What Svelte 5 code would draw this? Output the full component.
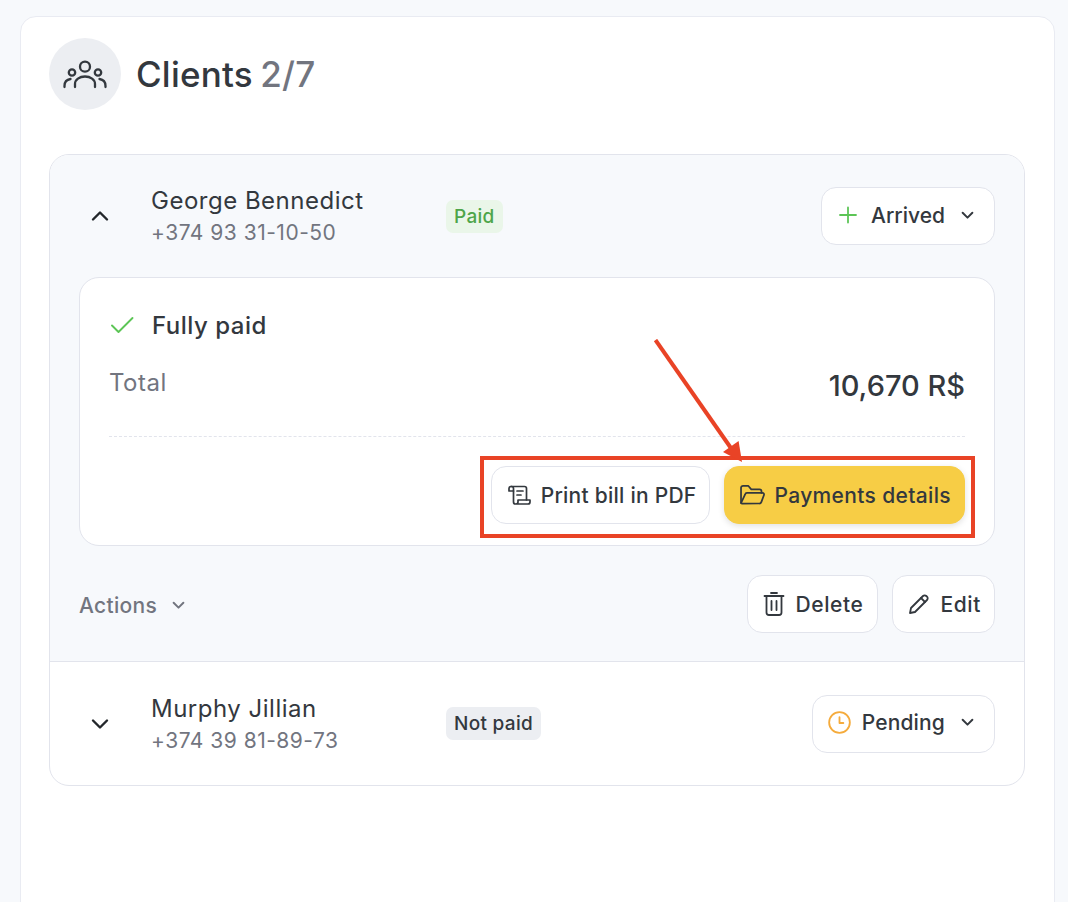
<script>
  const clients = [
    { name: "George Bennedict", phone: "+374 93 31-10-50", badge: "Paid", paid: true, status: "Arrived", open: true },
    { name: "Murphy Jillian", phone: "+374 39 81-89-73", badge: "Not paid", paid: false, status: "Pending", open: false }
  ];
</script>

{#snippet chevron(cls)}
  <svg class={cls} viewBox="0 0 12 8" fill="none" stroke="currentColor" stroke-linecap="round" stroke-linejoin="round">
    <path d="M1.5 1.5 6 6l4.5-4.5" />
  </svg>
{/snippet}

<div class="page">
  <div class="card">
    <header class="title-row">
      <div class="avatar">
        <svg width="44" height="44" viewBox="0 0 44 44" fill="none" stroke="#33383e" stroke-width="2.300" stroke-linecap="round">
          <circle cx="22" cy="14.700" r="5" />
          <circle cx="9" cy="20.500" r="3.200" />
          <circle cx="35" cy="20.500" r="3.200" />
          <path d="M12 35v-3a10 7.500 0 0 1 20 0v3" />
          <path d="M1.500 35v-1c0-4 2.500-6.500 6-7" />
          <path d="M42.500 35v-1c0-4-2.500-6.500-6-7" />
        </svg>
      </div>
      <h1>Clients <span>2/7</span></h1>
    </header>

    <div class="list">
      {#each clients as c}
        <section class="client" class:open={c.open}>
          <div class="client-head">
            <svg class="toggle" viewBox="0 0 18 12" fill="none" stroke="#23272b" stroke-width="2.400" stroke-linecap="round" stroke-linejoin="round">
              {#if c.open}
                <path d="M2 9.500 9 2.500l7 7" />
              {:else}
                <path d="M2 2.500l7 7 7-7" />
              {/if}
            </svg>
            <div class="who">
              <div class="name">{c.name}</div>
              <div class="phone">{c.phone}</div>
            </div>
            <span class="badge" class:paid={c.paid}>{c.badge}</span>
            <button class="btn status" class:pending={!c.paid}>
              {#if c.paid}
                <svg class="plus" width="20" height="20" viewBox="0 0 20 20" fill="none" stroke="#5cc556" stroke-width="1.800" stroke-linecap="round">
                  <path d="M10 2.500v15M2 10h16" />
                </svg>
              {:else}
                <svg class="clock" width="23" height="23" viewBox="0 0 24 24" fill="none" stroke="#f5ab3c" stroke-width="1.900" stroke-linecap="round" stroke-linejoin="round">
                  <circle cx="12" cy="12" r="10.800" />
                  <path d="M12 6.500V12.500h4" />
                </svg>
              {/if}
              <span>{c.status}</span>
              {@render chevron("chev")}
            </button>
          </div>

          {#if c.open}
            <div class="bill">
              <div class="bill-state">
                <svg width="26" height="20" viewBox="0 0 26 20" fill="none" stroke="#5cc556" stroke-width="1.900" stroke-linecap="round" stroke-linejoin="round">
                  <path d="M3 10.500 9.500 17 23.500 3" />
                </svg>
                <span>Fully paid</span>
              </div>
              <div class="bill-total">
                <span class="total-label">Total</span>
                <span class="total-sum">10,670 R$</span>
              </div>
              <div class="bill-actions">
                <button class="btn print">
                  <svg width="24" height="24" viewBox="0 0 24 24" fill="none" stroke="#33383e" stroke-width="1.700" stroke-linecap="round" stroke-linejoin="round">
                    <path d="M4 3.500h13.500a2 2 0 0 1 2 2V17" />
                    <path d="M4 3.500a2 2 0 0 0-2 2V8h4.500V5.500a2 2 0 0 0-2-2" />
                    <path d="M6.500 8v11a2 2 0 0 0 2 2h12.500a2 2 0 0 0 2-2v-2H11v2a2 2 0 0 1-2 2" />
                    <path d="M10 8h6M10 12h4" />
                  </svg>
                  <span>Print bill in PDF</span>
                </button>
                <button class="btn primary">
                  <svg width="25" height="24" viewBox="1 2 24.400 21" fill="none" stroke="#33383e" stroke-width="1.700" stroke-linecap="round" stroke-linejoin="round">
                    <path d="M2 20V5.500a2 2 0 0 1 2-2h5l3 3.500h8a2 2 0 0 1 2 2v1.500" />
                    <path d="M2 20.500 6 12a2 2 0 0 1 1.800-1.500H23a1.500 1.500 0 0 1 1.400 2l-2.600 7a2 2 0 0 1-1.900 1.300H3.500A1.500 1.500 0 0 1 2 20.500Z" />
                  </svg>
                  <span>Payments details</span>
                </button>
              </div>
            </div>

            <div class="client-foot">
              <div class="actions">
                <span>Actions</span>
                {@render chevron("chev light")}
              </div>
              <div class="foot-btns">
                <button class="btn">
                  <svg width="22" height="26" viewBox="0 0 22 26" fill="none" stroke="#33383e" stroke-width="1.800" stroke-linecap="round" stroke-linejoin="round">
                    <path d="M1.500 5h19M8 2h6" />
                    <path d="M3.500 5v16.500a2.500 2.500 0 0 0 2.500 2.500h10a2.500 2.500 0 0 0 2.500-2.500V5" />
                    <path d="M8.500 10v9M13.500 10v9" />
                  </svg>
                  <span>Delete</span>
                </button>
                <button class="btn">
                  <svg width="22" height="22" viewBox="0 0 22 22" fill="none" stroke="#33383e" stroke-width="1.800" stroke-linecap="round" stroke-linejoin="round">
                    <path d="M2 20l1-5L15 3a2.300 2.300 0 0 1 3.300 0l.7.700a2.300 2.300 0 0 1 0 3.300L7 19Z" />
                    <path d="M13 5l4 4" />
                  </svg>
                  <span>Edit</span>
                </button>
              </div>
            </div>
          {/if}
        </section>
      {/each}
    </div>
  </div>

  <!-- annotation drawn over the screenshot -->
  <div class="callout"></div>
  <svg class="arrow" width="100" height="130" viewBox="0 0 100 130" fill="none">
    <path d="M2.500 1 80 112" stroke="#e94326" stroke-width="4" />
    <path d="M89 123 85.600 102 70 113Z" fill="#e94326" />
  </svg>
</div>

<style>
  :global(body) {
    margin: 0;
    background: #f7f9fc;
    font-family: Inter, "Liberation Sans", sans-serif;
    color: #33383e;
  }

  .page {
    position: relative;
    height: 902px;
    overflow: hidden;
    padding: 16px 13px 0 20px;
    box-sizing: border-box;
  }

  .card {
    background: #fff;
    border: 1px solid #e9ebf2;
    border-radius: 16px;
    padding: 21px 28px 0;
    height: 960px;
    box-sizing: border-box;
  }

  .title-row {
    display: flex;
    align-items: center;
    gap: 15px;
    margin-bottom: 44px;
  }

  .avatar {
    width: 72px;
    height: 72px;
    border-radius: 50%;
    background: #eceef2;
    display: flex;
    align-items: center;
    justify-content: center;
  }

  h1 {
    margin: 0;
    font-size: 35px;
    font-weight: 500;
    line-height: 72px;
    letter-spacing: 0.2px;
  }

  h1 span {
    margin-left: -2px;
    color: #72757f;
  }

  .list {
    width: 976px;
    border: 1px solid #e2e4ec;
    border-radius: 20px;
    overflow: hidden;
    box-sizing: border-box;
  }

  .client + .client {
    border-top: 1px solid #e2e4ec;
  }

  .client.open {
    background: #f7f9fc;
    padding-bottom: 28px;
  }

  .client-head {
    display: flex;
    align-items: center;
    height: 123px;
    padding: 0 29px 0 41px;
  }

  .client.open .client-head {
    height: 122px;
  }

  .toggle {
    width: 18px;
    height: 12px;
    flex: none;
  }

  .who {
    margin-left: 42px;
    padding-top: 2px;
    width: 295px;
    flex: none;
  }

  .name {
    font-size: 24px;
    line-height: 32px;
    letter-spacing: 0.5px;
    color: #33383e;
  }

  .phone {
    font-size: 21px;
    line-height: 32px;
    letter-spacing: 0.5px;
    color: #72757f;
  }

  .badge {
    background: #eceef2;
    border-radius: 7px;
    padding: 0 8px;
    font-size: 19px;
    line-height: 33px;
    font-weight: 500;
    letter-spacing: 0.3px;
    color: #33383e;
  }

  .badge.paid {
    background: #eaf6e9;
    color: #4ea549;
  }

  .btn {
    display: inline-flex;
    align-items: center;
    gap: 11px;
    height: 58px;
    padding: 0 14px 0 15px;
    background: #fff;
    border: 1px solid #e2e4ec;
    border-radius: 15px;
    font: inherit;
    font-size: 21px;
    font-weight: 500;
    letter-spacing: 0.3px;
    color: #33383e;
    box-sizing: border-box;
  }

  .status {
    margin-left: auto;
    padding: 0 20px 2px 16px;
    letter-spacing: 0;
  }

  .status.pending {
    letter-spacing: 0.15px;
  }

  .plus {
    margin-right: 2px;
  }

  .clock {
    margin-left: -1px;
  }

  .chev {
    width: 13px;
    height: 9px;
    stroke-width: 1.800;
    margin-left: 5px;
  }

  .bill {
    margin: 0 29px;
    background: #fff;
    border: 1px solid #e2e4ec;
    border-radius: 20px;
    height: 269px;
    padding: 0 29px;
    box-sizing: border-box;
    display: flex;
    flex-direction: column;
  }

  .bill-state {
    display: flex;
    align-items: center;
    gap: 17px;
    padding-top: 32px;
    height: 30px;
    font-size: 24px;
    font-weight: 500;
    letter-spacing: 0.5px;
  }

  .bill-total {
    display: flex;
    justify-content: space-between;
    align-items: flex-start;
    margin-top: 25px;
    height: 71px;
    border-bottom: 1px dashed #e2e4ec;
  }

  .total-label {
    font-size: 24px;
    line-height: 36px;
    letter-spacing: 0.5px;
    color: #72757f;
  }

  .total-sum {
    font-size: 29px;
    line-height: 42px;
    font-weight: 500;
  }

  .bill-actions {
    display: flex;
    justify-content: flex-end;
    gap: 14px;
    margin-top: 29px;
  }

  .bill-actions .btn {
    padding-right: 13px;
  }

  .print {
    gap: 10px;
    letter-spacing: 0.25px;
  }

  .primary {
    gap: 9px;
    letter-spacing: 0.35px;
    background: #f7cd45;
    border-color: #f7cd45;
    box-shadow: 0 2px 6px rgba(0, 0, 0, 0.12);
  }

  .client-foot {
    display: flex;
    align-items: center;
    justify-content: space-between;
    margin: 29px 29px 0;
  }

  .actions {
    display: flex;
    align-items: center;
    gap: 10px;
    padding-top: 2px;
    font-size: 21px;
    font-weight: 500;
    letter-spacing: 0.3px;
    color: #72757f;
  }

  .foot-btns {
    display: flex;
    gap: 14px;
  }

  .foot-btns .btn {
    letter-spacing: 0.6px;
    padding-right: 13px;
  }

  .callout {
    position: absolute;
    left: 480px;
    top: 456px;
    width: 495px;
    height: 82px;
    border: 4px solid #e94326;
    box-sizing: border-box;
  }

  .arrow {
    position: absolute;
    left: 653px;
    top: 339px;
  }
</style>
